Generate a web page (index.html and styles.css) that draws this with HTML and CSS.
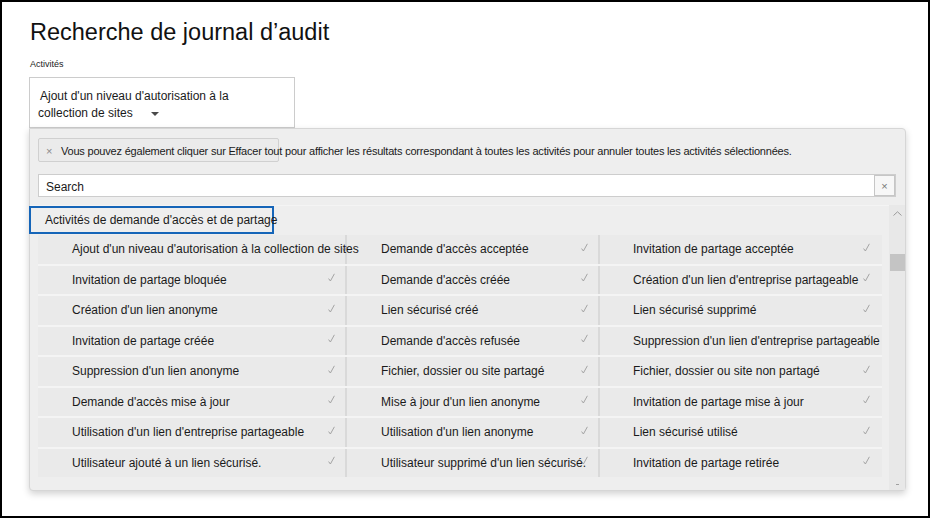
FILE: index.html
```html
<!DOCTYPE html>
<html lang="fr">
<head>
<meta charset="utf-8">
<title>Recherche de journal d’audit</title>
<link rel="stylesheet" href="styles.css">
</head>
<body>
<div class="page">
  <h1 class="title">Recherche de journal d’audit</h1>
  <div class="label">Activités</div>
  <div class="dropdown">
    <div class="dd-line1">Ajout d'un niveau d'autorisation à la</div>
    <div class="dd-line2">collection de sites<span class="caret"></span></div>
  </div>
  <div class="panel">
    <div class="chip"><span class="chip-x">×</span><span class="chip-text">Vous pouvez également cliquer sur Effacer tout pour afficher les résultats correspondant à toutes les activités pour annuler toutes les activités sélectionnées.</span></div>
    <div class="search"><span class="search-text">Search</span><span class="search-clear">×</span></div>
    <div class="list">
      <div class="list-main">
        <div class="group-row"><div class="group-head">Activités de demande d'accès et de partage</div></div>
        <div class="rows">
          <div class="row">
            <div class="cell"><span class="txt">Ajout d'un niveau d'autorisation à la collection de sites</span><svg class="chk" viewBox="0 0 7 9"><path d="M0.6 5.6 L2.4 8 L6.4 0.8"/></svg></div>
            <div class="cell"><span class="txt">Demande d'accès acceptée</span><svg class="chk" viewBox="0 0 7 9"><path d="M0.6 5.6 L2.4 8 L6.4 0.8"/></svg></div>
            <div class="cell"><span class="txt">Invitation de partage acceptée</span><svg class="chk" viewBox="0 0 7 9"><path d="M0.6 5.6 L2.4 8 L6.4 0.8"/></svg></div>
          </div>
          <div class="row">
            <div class="cell"><span class="txt">Invitation de partage bloquée</span><svg class="chk" viewBox="0 0 7 9"><path d="M0.6 5.6 L2.4 8 L6.4 0.8"/></svg></div>
            <div class="cell"><span class="txt">Demande d'accès créée</span><svg class="chk" viewBox="0 0 7 9"><path d="M0.6 5.6 L2.4 8 L6.4 0.8"/></svg></div>
            <div class="cell"><span class="txt">Création d'un lien d'entreprise partageable</span><svg class="chk" viewBox="0 0 7 9"><path d="M0.6 5.6 L2.4 8 L6.4 0.8"/></svg></div>
          </div>
          <div class="row">
            <div class="cell"><span class="txt">Création d'un lien anonyme</span><svg class="chk" viewBox="0 0 7 9"><path d="M0.6 5.6 L2.4 8 L6.4 0.8"/></svg></div>
            <div class="cell"><span class="txt">Lien sécurisé créé</span><svg class="chk" viewBox="0 0 7 9"><path d="M0.6 5.6 L2.4 8 L6.4 0.8"/></svg></div>
            <div class="cell"><span class="txt">Lien sécurisé supprimé</span><svg class="chk" viewBox="0 0 7 9"><path d="M0.6 5.6 L2.4 8 L6.4 0.8"/></svg></div>
          </div>
          <div class="row">
            <div class="cell"><span class="txt">Invitation de partage créée</span><svg class="chk" viewBox="0 0 7 9"><path d="M0.6 5.6 L2.4 8 L6.4 0.8"/></svg></div>
            <div class="cell"><span class="txt">Demande d'accès refusée</span><svg class="chk" viewBox="0 0 7 9"><path d="M0.6 5.6 L2.4 8 L6.4 0.8"/></svg></div>
            <div class="cell"><span class="txt">Suppression d'un lien d'entreprise partageable</span><svg class="chk" viewBox="0 0 7 9"><path d="M0.6 5.6 L2.4 8 L6.4 0.8"/></svg></div>
          </div>
          <div class="row">
            <div class="cell"><span class="txt">Suppression d'un lien anonyme</span><svg class="chk" viewBox="0 0 7 9"><path d="M0.6 5.6 L2.4 8 L6.4 0.8"/></svg></div>
            <div class="cell"><span class="txt">Fichier, dossier ou site partagé</span><svg class="chk" viewBox="0 0 7 9"><path d="M0.6 5.6 L2.4 8 L6.4 0.8"/></svg></div>
            <div class="cell"><span class="txt">Fichier, dossier ou site non partagé</span><svg class="chk" viewBox="0 0 7 9"><path d="M0.6 5.6 L2.4 8 L6.4 0.8"/></svg></div>
          </div>
          <div class="row">
            <div class="cell"><span class="txt">Demande d'accès mise à jour</span><svg class="chk" viewBox="0 0 7 9"><path d="M0.6 5.6 L2.4 8 L6.4 0.8"/></svg></div>
            <div class="cell"><span class="txt">Mise à jour d'un lien anonyme</span><svg class="chk" viewBox="0 0 7 9"><path d="M0.6 5.6 L2.4 8 L6.4 0.8"/></svg></div>
            <div class="cell"><span class="txt">Invitation de partage mise à jour</span><svg class="chk" viewBox="0 0 7 9"><path d="M0.6 5.6 L2.4 8 L6.4 0.8"/></svg></div>
          </div>
          <div class="row">
            <div class="cell"><span class="txt">Utilisation d'un lien d'entreprise partageable</span><svg class="chk" viewBox="0 0 7 9"><path d="M0.6 5.6 L2.4 8 L6.4 0.8"/></svg></div>
            <div class="cell"><span class="txt">Utilisation d'un lien anonyme</span><svg class="chk" viewBox="0 0 7 9"><path d="M0.6 5.6 L2.4 8 L6.4 0.8"/></svg></div>
            <div class="cell"><span class="txt">Lien sécurisé utilisé</span><svg class="chk" viewBox="0 0 7 9"><path d="M0.6 5.6 L2.4 8 L6.4 0.8"/></svg></div>
          </div>
          <div class="row">
            <div class="cell"><span class="txt">Utilisateur ajouté à un lien sécurisé.</span><svg class="chk" viewBox="0 0 7 9"><path d="M0.6 5.6 L2.4 8 L6.4 0.8"/></svg></div>
            <div class="cell"><span class="txt">Utilisateur supprimé d'un lien sécurisé.</span><svg class="chk" viewBox="0 0 7 9"><path d="M0.6 5.6 L2.4 8 L6.4 0.8"/></svg></div>
            <div class="cell"><span class="txt">Invitation de partage retirée</span><svg class="chk" viewBox="0 0 7 9"><path d="M0.6 5.6 L2.4 8 L6.4 0.8"/></svg></div>
          </div>
        </div>
      </div>
      <div class="scrollbar">
        <svg class="sb-up" viewBox="0 0 9 5"><path d="M0.5 4.5 L4.5 0.8 L8.5 4.5"/></svg>
        <div class="sb-thumb"></div>
        <div class="sb-down"></div>
      </div>
    </div>
  </div>
</div>
</body>
</html>
```
FILE: styles.css
```css
html, body {
  margin: 0;
  padding: 0;
  background: #ffffff;
}

body {
  width: 930px;
  height: 518px;
  box-sizing: border-box;
  border: 2px solid #000000;
  font-family: "Liberation Sans", Arial, sans-serif;
  color: #1a1a1a;
  overflow: hidden;
}

.page {
  padding: 16px 0 0 28px;
}

.title {
  margin: 0;
  font-size: 23.5px;
  line-height: 28px;
  font-weight: 400;
  color: #111111;
}

.label {
  margin-top: 13px;
  font-size: 9px;
  line-height: 11px;
  color: #222222;
}

.dropdown {
  margin-top: 7px;
  margin-left: -1px;
  width: 266px;
  height: 51px;
  box-sizing: border-box;
  border: 1px solid #cccccc;
  padding: 10px 0 0 10px;
  font-size: 12px;
  line-height: 17px;
  color: #1a1a1a;
}

.dd-line2 {
  margin-left: -2px;
  display: flex;
  align-items: center;
}

.caret {
  margin-left: 18px;
  margin-top: 1px;
  width: 0;
  height: 0;
  border-left: 4px solid transparent;
  border-right: 4px solid transparent;
  border-top: 4px solid #4a4a4a;
}

.panel {
  margin-left: -1px;
  width: 877px;
  height: 363px;
  box-sizing: border-box;
  background: #eeeeee;
  border: 1px solid #d6d6d6;
  border-radius: 0 4px 4px 4px;
  box-shadow: 0 3px 7px rgba(0, 0, 0, 0.18);
  padding: 9px 9px 0 8px;
  display: flex;
  flex-direction: column;
}

.chip {
  width: 241px;
  height: 24px;
  box-sizing: border-box;
  border: 1px solid #d0d0d0;
  border-radius: 2px;
  background: #ebebeb;
  display: flex;
  align-items: center;
  padding: 2px 0 0 7px;
  white-space: nowrap;
}

.chip-x {
  font-size: 11px;
  color: #8a8a8a;
  width: 15px;
  flex: none;
}

.chip-text {
  font-size: 11px;
  letter-spacing: -0.2px;
  color: #1a1a1a;
}

.search {
  margin-top: 12px;
  height: 23px;
  box-sizing: border-box;
  background: #ffffff;
  border: 1px solid #cdcdcd;
  display: flex;
  align-items: center;
  justify-content: space-between;
}

.search-text {
  font-size: 12px;
  padding: 2px 0 0 7px;
  color: #1a1a1a;
}

.search-clear {
  width: 21px;
  height: 21px;
  box-sizing: border-box;
  border: 1px solid #c6c6c6;
  background: #f7f7f7;
  color: #777777;
  font-size: 11px;
  display: flex;
  align-items: center;
  justify-content: center;
}

.list {
  margin: 8px -9px 0 -8px;
  flex: 1;
  display: flex;
  min-height: 0;
}

.list-main {
  flex: 1;
  border-top: 1px solid #f4f4f4;
}

.group-row {
  height: 29px;
}

.group-head {
  margin-left: -1px;
  width: 245px;
  height: 28px;
  box-sizing: border-box;
  border: 2px solid #1565b8;
  font-size: 12px;
  line-height: 24px;
  padding-left: 14px;
  white-space: nowrap;
  color: #1a1a1a;
}

.rows {
  margin-left: 8px;
  width: 844px;
  display: flex;
  flex-direction: column;
  gap: 2px;
  background: #f4f4f4;
}

.row {
  display: grid;
  grid-template-columns: 307px 251px 282px;
  column-gap: 2px;
  height: 28.5px;
  background: #d9d9d9;
}

.cell {
  background: #eaeaea;
  display: grid;
  align-items: center;
  font-size: 12px;
  color: #1a1a1a;
  white-space: nowrap;
}

.cell > * {
  grid-area: 1 / 1;
}

.txt {
  justify-self: start;
  padding-left: 34px;
  position: relative;
  z-index: 1;
}

.cell:nth-child(3) .txt {
  padding-left: 33px;
}

.chk {
  justify-self: end;
  width: 7px;
  height: 9px;
  margin: 0 10px 4px 0;
  fill: none;
  stroke: #a3a3a3;
  stroke-width: 1;
}

.cell:nth-child(3) .chk {
  margin-right: 12px;
}

.scrollbar {
  width: 16px;
  background: #e8e8e8;
  display: flex;
  flex-direction: column;
  align-items: center;
}

.sb-up {
  margin-top: 6px;
  width: 9px;
  height: 5px;
  fill: none;
  stroke: #9a9a9a;
  stroke-width: 1;
}

.sb-thumb {
  margin-top: 38px;
  width: 15px;
  height: 17px;
  background: #c4c4c4;
}

.sb-down {
  margin-top: auto;
  margin-bottom: 5px;
  width: 3px;
  height: 1px;
  background: #a0a0a0;
}
```
